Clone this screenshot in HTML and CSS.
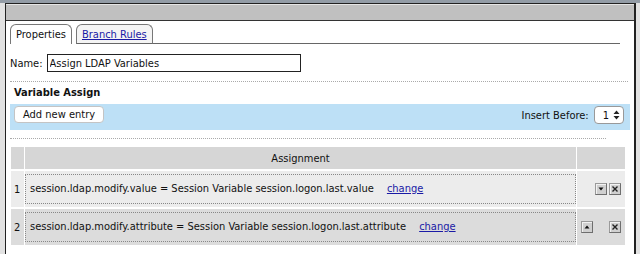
FILE: index.html
```html
<!DOCTYPE html>
<html lang="en">
<head>
    <meta charset="UTF-8">
    <title>Variable Assign</title>
    <link rel="stylesheet" href="styles.css">
</head>
<body>
    <div class="backdrop"></div>
    <div class="dialog">
        <div class="titlebar"></div>
        <div class="content">
            <div class="tabs">
                <div class="tab active">Properties</div>
                <div class="tab"><a href="#">Branch Rules</a></div>
                <div class="tab-rest"></div>
            </div>

            <div class="name-row">
                <label for="name">Name:</label>
                <input type="text" id="name" value="Assign LDAP Variables">
            </div>

            <div class="dots"></div>

            <h2>Variable Assign</h2>
            <div class="toolbar">
                <button class="add">Add new entry</button>
                <div class="insert">
                    Insert Before:
                    <span class="select">1
                        <svg width="7" height="10" viewBox="0 0 7 10"><path d="M3.5 0.5 L6.5 4 H0.5 Z M0.5 6 H6.5 L3.5 9.5 Z" fill="#222"/></svg>
                    </span>
                </div>
            </div>

            <div class="dots short"></div>

            <table class="grid">
                <thead>
                    <tr>
                        <th class="num"></th>
                        <th>Assignment</th>
                        <th class="ctl"></th>
                    </tr>
                </thead>
                <tbody>
                    <tr class="odd">
                        <td class="num">1</td>
                        <td><div class="expr">session.ldap.modify.value = Session Variable session.logon.last.value <a href="#">change</a></div></td>
                        <td class="ctl">
                            <span class="btn hidden"></span>
                            <span class="btn"><svg width="10" height="10" viewBox="0 0 10 10"><path d="M2.5 3.5 H7.5 L5 6.5 Z" fill="#111"/></svg></span>
                            <span class="btn"><svg width="10" height="10" viewBox="0 0 10 10"><path d="M2.5 2.5 L7.5 7.5 M7.5 2.5 L2.5 7.5" stroke="#222" stroke-width="1.4"/></svg></span>
                        </td>
                    </tr>
                    <tr class="even">
                        <td class="num">2</td>
                        <td><div class="expr">session.ldap.modify.attribute = Session Variable session.logon.last.attribute <a href="#">change</a></div></td>
                        <td class="ctl">
                            <span class="btn"><svg width="10" height="10" viewBox="0 0 10 10"><path d="M2.5 6.5 H7.5 L5 3.5 Z" fill="#111"/></svg></span>
                            <span class="btn hidden"></span>
                            <span class="btn"><svg width="10" height="10" viewBox="0 0 10 10"><path d="M2.5 2.5 L7.5 7.5 M7.5 2.5 L2.5 7.5" stroke="#222" stroke-width="1.4"/></svg></span>
                        </td>
                    </tr>
                </tbody>
            </table>
        </div>
    </div>
</body>
</html>
```

FILE: styles.css
```css
body {
    margin: 0;
    font-family: "DejaVu Sans Condensed", "Liberation Sans", sans-serif;
    font-size: 11px;
    color: #111;
    background-color: #e2e2e2;
    overflow: hidden;
}
.backdrop {
    height: 3px;
    background-color: #939ca6;
}
.dialog {
    margin-left: 5px;
    width: 628px;
    height: 260px;
    background-color: white;
    border: 1px solid #222;
    border-right: 2px solid #222;
    border-bottom: none;
}
.titlebar {
    height: 15px;
    background-color: #c0c0c0;
    border-top: 1px solid #e6e6e6;
    border-bottom: 1px solid #333;
}
.content {
    padding: 3px 4px 0 4px;
}
.tabs {
    display: flex;
    align-items: flex-end;
    height: 20px;
}
.tab {
    height: 19px;
    line-height: 19px;
    padding: 0 5px;
    border: 1px solid #777;
    border-bottom: none;
    border-radius: 6px 6px 0 0;
    background-color: white;
    margin-right: 4px;
}
.tab a {
    color: #1a1aa6;
}
.tab:not(.active) {
    height: 18px;
    line-height: 19px;
    border-bottom: 1px solid #666;
    background-color: #f4f4f4;
}
.tab-rest {
    width: 467px;
    border-bottom: 1px solid #666;
    margin-left: -4px;
}
.name-row {
    display: flex;
    align-items: center;
    margin-top: 10px;
    height: 18px;
}
.name-row label {
    margin-right: 4px;
}
.name-row input {
    width: 254px;
    height: 18px;
    box-sizing: border-box;
    border: 1px solid #222;
    padding: 0 2px;
    font-family: inherit;
    font-size: 11px;
    color: #111;
}
.dots {
    border-top: 1px dotted #aaa;
    margin-top: 9px;
    width: 618px;
}
.dots.short {
    width: 596px;
    margin-top: 8px;
}
h2 {
    font-size: 11px;
    margin: 3px 0 3px 4px;
    height: 16px;
    line-height: 16px;
}
.toolbar {
    display: flex;
    justify-content: space-between;
    align-items: flex-start;
    background-color: #bde0f6;
    height: 24px;
    padding: 2px 6px 0 4px;
}
.add {
    font-family: inherit;
    font-size: 11px;
    background-color: white;
    border: 1px solid #c4c4c4;
    border-radius: 4px;
    height: 17px;
    padding: 0 8px;
    color: #111;
}
.insert {
    display: flex;
    align-items: center;
    gap: 5px;
    height: 18px;
}
.select {
    display: inline-flex;
    align-items: center;
    gap: 4px;
    height: 16px;
    padding: 0 3px 0 8px;
    border: 1px solid #999;
    border-radius: 4px;
    background-color: white;
}
.grid {
    margin-top: 6px;
    width: 616px;
    table-layout: fixed;
    border-collapse: separate;
    border-spacing: 1px 2px;
}
.grid th, .grid td {
    box-sizing: border-box;
    padding: 0;
}
.grid th {
    background-color: #d6d6d6;
    font-weight: normal;
    height: 22px;
}
.grid .num {
    width: 13px;
    padding-left: 3px;
    text-align: left;
}
.grid .ctl {
    width: 48px;
}
.grid tr.odd td {
    background-color: #ececec;
    height: 36px;
}
.grid tr.even td {
    background-color: #dcdcdc;
    height: 36px;
}
.expr {
    border: 1px dotted #888;
    padding: 0 4px;
    height: 28px;
    line-height: 28px;
}
.expr a {
    color: #1a1aa6;
    margin-left: 10px;
}
.grid td.ctl {
    text-align: right;
    white-space: nowrap;
    padding-right: 4px;
    font-size: 0;
}
.btn {
    display: inline-block;
    width: 10px;
    height: 10px;
    background-color: #d0d0d0;
    border: 1px solid;
    border-color: #9a9a9a #6e6e6e #6e6e6e #9a9a9a;
    box-shadow: inset 1px 1px 0 #f2f2f2;
    vertical-align: middle;
    margin-left: 2px;
}
.btn svg {
    display: block;
}
.btn.hidden {
    visibility: hidden;
}
```
